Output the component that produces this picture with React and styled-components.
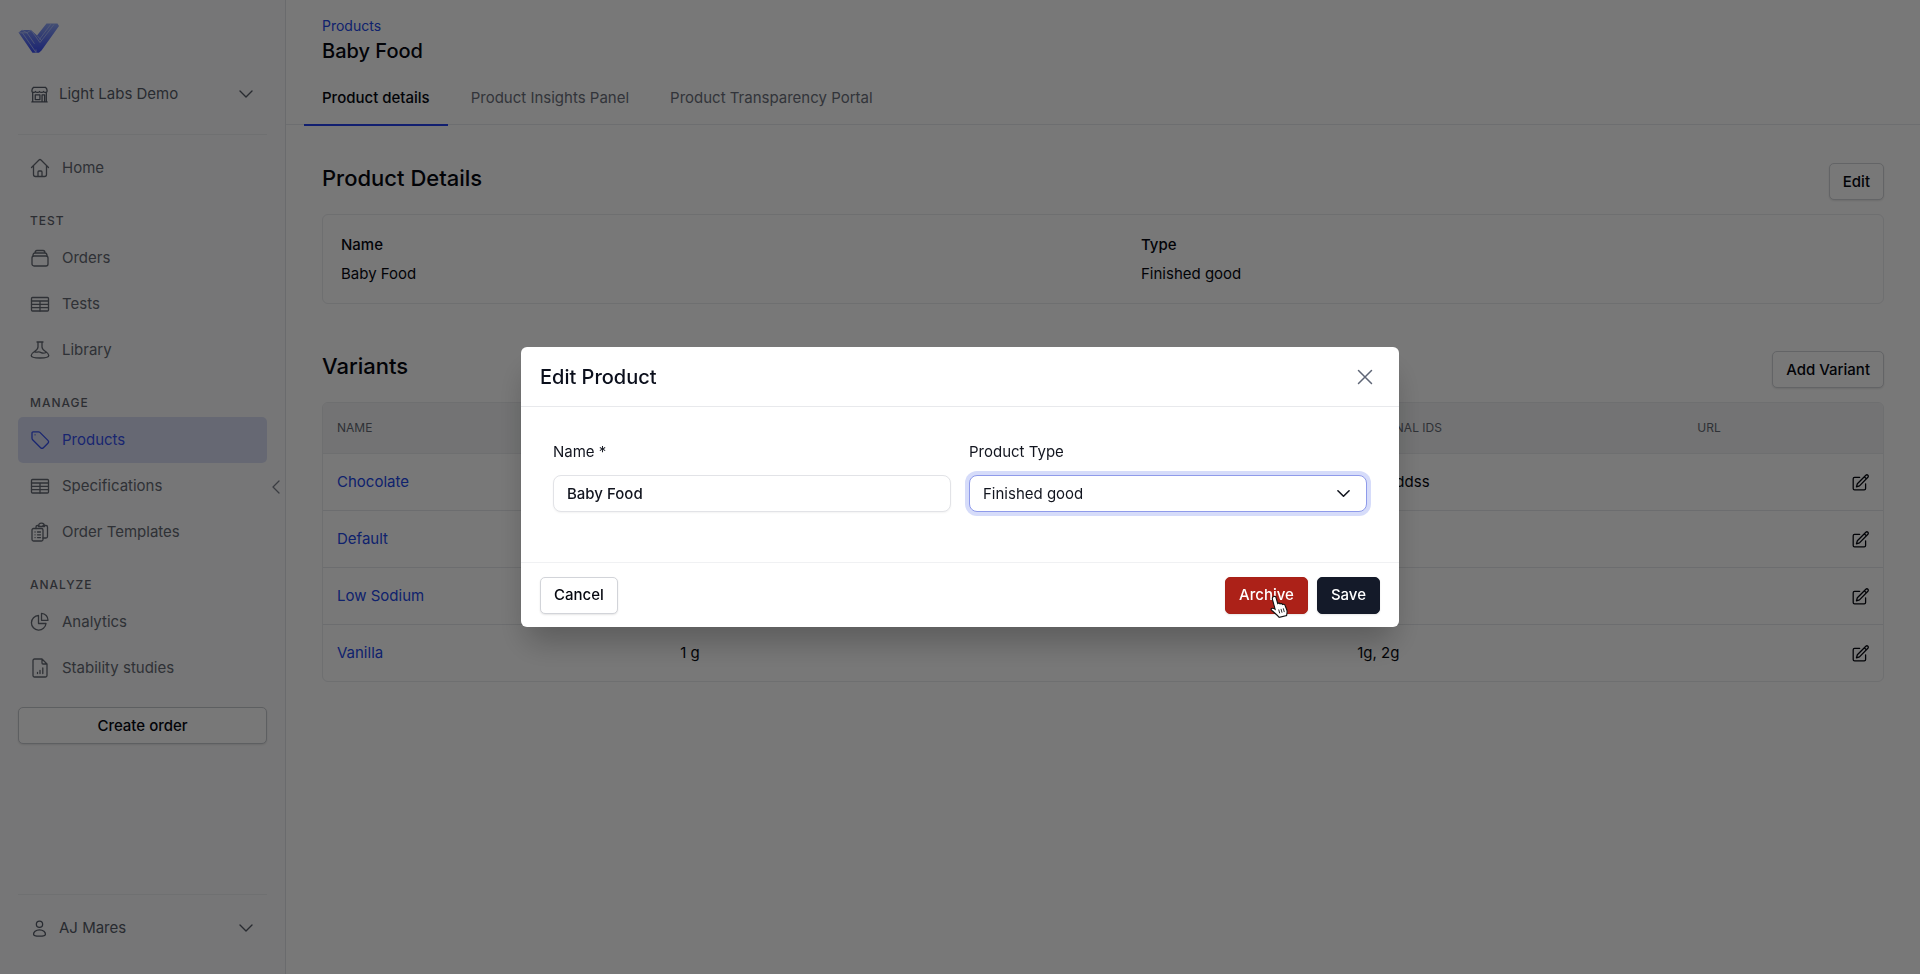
import React from 'react'
import styled, { createGlobalStyle } from 'styled-components'

const GlobalStyle = createGlobalStyle`
  * {
    box-sizing: border-box;
  }
  body {
    margin: 0;
    background: #ffffff;
    color: #05070f;
    font-family: Inter, "Liberation Sans", sans-serif;
    font-size: 15px;
    line-height: 24px;
  }
  button, input, select {
    font: inherit;
    color: inherit;
  }
  h1, h2, p, dl, dd {
    margin: 0;
  }
  a {
    color: #2348e8;
    text-decoration: none;
  }
`

const Layout = styled.div`
  display: flex;
  min-height: 100vh;
`

/* sidebar */
const Sidebar = styled.aside`
  position: relative;
  flex: 0 0 286px;
  display: flex;
  flex-direction: column;
  padding: 23px 18px;
  background: #fbfbfc;
  border-right: 1px solid #e2e4e8;
`
const LogoLink = styled.a`
  display: flex;
  height: 30px;
  margin-bottom: 18px;
`
const AccountButton = styled.button`
  display: flex;
  align-items: center;
  gap: 11px;
  width: 100%;
  height: 46px;
  padding: 0 14px 0 13px;
  border: 0;
  background: none;
  color: #565c69;
  text-align: left;
  span {
    flex: 1;
  }
`
const Divider = styled.hr`
  width: 100%;
  height: 1px;
  margin: ${({ $top }) => $top} 0 10px;
  border: 0;
  background: #eceef1;
`
const Nav = styled.nav`
  display: flex;
  flex-direction: column;
`
const NavHeading = styled.h2`
  height: 44px;
  padding: 20px 12px 4px;
  color: #5f636d;
  font-size: 12px;
  font-weight: 500;
  line-height: 20px;
  letter-spacing: 1px;
  text-transform: uppercase;
`
const NavItem = styled.a`
  display: flex;
  align-items: center;
  gap: 12px;
  height: 46px;
  padding: 0 12px;
  border-radius: 5px;
  background: ${({ $active }) => ($active ? '#d9def5' : 'none')};
  color: ${({ $active }) => ($active ? '#3650ee' : '#646973')};
`
const Footer = styled.div`
  margin-top: auto;
`
const CollapseButton = styled.button`
  position: absolute;
  right: 4px;
  top: 50%;
  display: flex;
  padding: 0;
  border: 0;
  background: none;
  color: #7c818c;
  transform: translateY(-50%);
`

/* buttons */
const Button = styled.button`
  height: 37px;
  padding: 0 13px;
  border: 1px solid #d2d4d9;
  border-radius: 5px;
  background: #ffffff;
  box-shadow: 0 1px 2px rgba(0, 0, 0, 0.1);
  font-weight: 500;
  white-space: nowrap;
`
const CreateButton = styled(Button)`
  width: 100%;
  margin-top: 16px;
  border-color: #c6c9cf;
`
const DangerButton = styled(Button)`
  border-color: #a82017;
  background: #ac2118;
  color: #ffffff;
`
const PrimaryButton = styled(Button)`
  border-color: #141a29;
  background: #141a29;
  color: #ffffff;
`

/* page */
const Main = styled.main`
  flex: 1;
  min-width: 0;
`
const PageHeader = styled.header`
  padding: 16px 18px 0;
  border-bottom: 1px solid #e8eaed;
`
const Breadcrumb = styled.a`
  display: block;
  padding: 0 18px;
  font-size: 14px;
  line-height: 20px;
`
const PageTitle = styled.h1`
  padding: 0 18px;
  font-size: 20px;
  font-weight: 500;
  line-height: 30px;
`
const Tabs = styled.div`
  display: flex;
  gap: 5px;
  margin-bottom: -2px;
`
const Tab = styled.button`
  padding: 20px 18px 14px;
  border: 0;
  border-bottom: 2px solid ${({ $active }) => ($active ? '#2443ee' : 'transparent')};
  background: none;
  color: ${({ $active }) => ($active ? '#05070f' : '#6b707b')};
  font-weight: ${({ $active }) => ($active ? 500 : 400)};
`
const Content = styled.div`
  display: flex;
  flex-direction: column;
  gap: 47px;
  padding: 38px 36px;
`
const SectionHead = styled.div`
  display: flex;
  justify-content: space-between;
  align-items: flex-start;
  margin-bottom: 14px;
`
const SectionTitle = styled.h2`
  font-size: 22px;
  font-weight: 500;
  line-height: 30px;
`
const DetailCard = styled.dl`
  display: grid;
  grid-template-columns: 1fr 1fr;
  gap: 76px;
  padding: 18px 18px 17px;
  border: 1px solid #eaebee;
  border-radius: 6px;
`
const DetailLabel = styled.dt`
  margin-bottom: 5px;
  font-weight: 500;
`
const TableCard = styled.div`
  border: 1px solid #eaebee;
  border-radius: 6px;
  overflow: hidden;
`
const Table = styled.table`
  width: 100%;
  table-layout: fixed;
  border-spacing: 0;
  text-align: left;
`
const HeadCell = styled.th`
  height: 51px;
  padding: 0 14px;
  border-bottom: 1px solid #eaebee;
  background: #f4f5f6;
  color: #646973;
  font-size: 12px;
  font-weight: 400;
  text-transform: uppercase;
`
const Cell = styled.td`
  height: 57px;
  padding: 0 14px;
  border-bottom: 1px solid #e6e8eb;
  text-align: ${({ $end }) => ($end ? 'right' : 'left')};
  tr:last-child & {
    height: 56px;
    border-bottom: 0;
  }
`
const IconButton = styled.button`
  display: inline-flex;
  padding: 0;
  border: 0;
  background: none;
  vertical-align: middle;
`

/* modal */
const Backdrop = styled.div`
  position: fixed;
  inset: 0;
  display: flex;
  align-items: center;
  justify-content: center;
  background: rgba(0, 0, 0, 0.53);
`
const Modal = styled.div`
  width: 878px;
  max-width: 100%;
  border-radius: 6px;
  background: #ffffff;
  box-shadow: 0 20px 30px -6px rgba(0, 0, 0, 0.25);
`
const ModalHeader = styled.div`
  display: flex;
  align-items: center;
  justify-content: space-between;
  height: 60px;
  padding: 0 26px 0 19px;
  border-bottom: 1px solid #e8e9ec;
  color: #5f6676;
`
const ModalTitle = styled.h2`
  color: #0b0f1c;
  font-size: 20px;
  font-weight: 500;
`
const ModalBody = styled.div`
  display: grid;
  grid-template-columns: 1fr 1fr;
  gap: 18px;
  padding: 33px 32px 50px;
`
const Field = styled.div`
  display: flex;
  flex-direction: column;
  gap: 11px;
  color: #12151f;
`
const Input = styled.input`
  width: 100%;
  height: 37px;
  padding: 0 13px;
  border: 1px solid #e2e3e7;
  border-radius: 8px;
  background: #ffffff;
  box-shadow: 0 1px 2px rgba(0, 0, 0, 0.05);
  font-weight: 500;
  outline: none;
`
const SelectBox = styled.div`
  position: relative;
  svg {
    position: absolute;
    right: 17px;
    top: 12px;
    pointer-events: none;
  }
`
const Select = styled.select`
  display: block;
  width: 100%;
  height: 37px;
  padding: 0 13px;
  border: 1px solid #8f9bea;
  border-radius: 8px;
  background: #ffffff;
  box-shadow: 0 0 0 4px #d6dcfa;
  appearance: none;
  outline: none;
`
const ModalFooter = styled.div`
  display: flex;
  align-items: center;
  gap: 9px;
  height: 65px;
  padding: 0 19px;
  border-top: 1px solid #f0f1f3;
`
const Spacer = styled.div`
  flex: 1;
`
const HoverTarget = styled.div`
  position: relative;
  svg {
    position: absolute;
    left: 44px;
    top: 18px;
    pointer-events: none;
  }
`

const Svg = ({ size = 20, width = size, height = size, box = '0 0 20 20', stroke = 1.3, children }) => (
  <svg
    width={width}
    height={height}
    viewBox={box}
    fill="none"
    stroke="currentColor"
    strokeWidth={stroke}
    strokeLinecap="round"
    strokeLinejoin="round"
    aria-hidden="true"
  >
    {children}
  </svg>
)

const Logo = () => (
  <svg width="42" height="30" viewBox="0 0 42 30" aria-hidden="true">
    <defs>
      <linearGradient id="mark" x1="0" y1="0" x2="0" y2="1">
        <stop offset="0" stopColor="#8fa6f5" />
        <stop offset="1" stopColor="#3a4df5" />
      </linearGradient>
    </defs>
    <path d="M.5 9.500 4 7h9l6 5.500L28.500.5h11L41 3 23.500 27.500 21 29.800h-6.500Z" fill="url(#mark)" />
    <g fill="none" stroke="#b9c6fa" strokeWidth="0.8">
      <path d="M1 9.800h8L13 7M4.500 10 18 29.500M9 9.800l7.500 11M13 7l9 12.500L36 1.500M19 12.500l4.500 5M33 1 21.500 16.500M18 29.500v-3M9 9.800 4 7" />
    </g>
  </svg>
)

const StoreIcon = () => (
  <Svg size={17} stroke={1.5}>
    <path d="M3 1.500h14c1.500 1.200 2 2.800 2 4.500 0 2-3.500 2-4.200.5C14 8 10.800 8 10 6.500 9.200 8 6 8 5.200 6.500 4.500 8 1 8 1 6c0-1.700.5-3.300 2-4.500ZM2 8v10.500M18 8v10.500M1 18.700h18M5 10.500h5.500V16H5ZM13 18.500v-8h3v8" />
  </Svg>
)
const HomeIcon = () => (
  <Svg>
    <path d="M1.500 9.500 9 2a1.500 1.500 0 0 1 2 0l7.500 7.500M3.500 8v8.500a2 2 0 0 0 2 2h9a2 2 0 0 0 2-2V8M8 18.500V14a1 1 0 0 1 1-1h2a1 1 0 0 1 1 1v4.500" />
  </Svg>
)
const OrdersIcon = () => (
  <Svg>
    <rect x="2" y="8" width="16" height="10" rx="2" />
    <path d="M3 8c0-2 .7-3 2-3h10c1.300 0 2 1 2 3M5 5c0-1.600.7-2.500 2-2.500h6c1.300 0 2 .9 2 2.500" />
  </Svg>
)
const TableIcon = () => (
  <Svg>
    <rect x="1.500" y="3.500" width="17" height="13.500" rx="1" />
    <path d="M1.500 7h17M1.500 10.300h17M1.500 13.600h17M10 7v10" />
  </Svg>
)
const FlaskIcon = () => (
  <Svg>
    <path d="M7 2h6M8 2v5c0 2-1.500 3.200-3.500 4.500C2.500 12.800 1.200 14 1.200 15.500 1.200 17 2.500 18 10 18s8.800-1 8.800-2.500c0-1.500-1.300-2.700-3.300-4C13.500 10.200 12 9 12 7V2M4.500 11.800c2 .8 3.500-.3 5.500.4s3 2 6.500 0" />
  </Svg>
)
const TagIcon = () => (
  <Svg>
    <path d="M3 1.800h5.500a2 2 0 0 1 1.400.6l8 8a2 2 0 0 1 0 2.800l-4.500 4.500a2 2 0 0 1-2.800 0l-8-8A2 2 0 0 1 2 8.300V2.800a1 1 0 0 1 1-1Z" />
    <path d="M5 4.800h.1" />
  </Svg>
)
const ClipboardIcon = () => (
  <Svg>
    <rect x="2" y="6.500" width="11" height="12.500" rx="1.500" />
    <path d="M5 10h.1M7.500 10h3M5 12.800h.1M7.500 12.800h3M5 15.600h.1M7.500 15.600h3M6 6.500V5a1.500 1.500 0 0 1 1.500-1.500H9M13 3.500h3A1.500 1.500 0 0 1 17.500 5v9.500A1.500 1.500 0 0 1 16 16h-3M8.500 4.500c0-2 .5-3.300 3-3.300s3 1.300 3 3.300Z" />
  </Svg>
)
const PieIcon = () => (
  <Svg>
    <path d="M8.500 3.500v8h7.500a7.300 7.300 0 1 1-7.500-8Z" />
    <path d="M11.500 1.300v7h6.500a6.800 6.800 0 0 0-6.500-7Z" />
  </Svg>
)
const ReportIcon = () => (
  <Svg>
    <path d="M3 2.500a1.500 1.500 0 0 1 1.500-1.500h7.500l5 5v11.500a1.500 1.500 0 0 1-1.500 1.500h-11A1.500 1.500 0 0 1 3 17.500ZM12 1v4a1 1 0 0 0 1 1h4M7.500 15.500v-1M10 15.500v-3M12.800 15.500v-5.500" />
  </Svg>
)
const UserIcon = () => (
  <Svg size={17} stroke={1.5}>
    <circle cx="10" cy="5" r="3.700" />
    <path d="M10 11.500c-4.500 0-7 3-7 5.200 0 1.500 2.500 2.300 7 2.300s7-.8 7-2.300c0-2.200-2.500-5.200-7-5.200Z" />
  </Svg>
)
const ChevronDown = ({ size = 14, stroke = 1.4 }) => (
  <Svg size={size} box="0 0 14 14" stroke={stroke}>
    <path d="m1 4 6 6 6-6" />
  </Svg>
)
const EditIcon = () => (
  <Svg size={17} stroke={1.5}>
    <path d="M9 4H3a1.600 1.600 0 0 0-1.600 1.600v11.400A1.600 1.600 0 0 0 3 18.600h11.400a1.600 1.600 0 0 0 1.600-1.600v-5.500" />
    <path d="M16.300 1.500a1.600 1.600 0 0 1 2.400 2.400L8.800 14l-3.600 1.200L6.300 11.500ZM14.500 3.300l2.400 2.400" />
  </Svg>
)
const HandCursor = () => (
  <svg width="21" height="24" viewBox="0 0 21 24" aria-hidden="true">
    <path
      d="M4.800 1.500c1.200-.4 2 .2 2.300 1.300L8.700 8.500c.8-.7 2-.5 2.400.4.900-.6 2.100-.3 2.500.6 1-.5 2.200 0 2.600 1.200l1.700 4.500c.6 1.800 0 3.300-.3 5.300l-7.400 1.900c-1.500-2-3.600-3.500-5.600-5.400-1.300-1.200-2.900-1.700-2.500-2.900.4-1.100 2.300-1 4 .1L3.300 3.800C3 2.700 3.600 1.900 4.800 1.500Z"
      fill="#ffffff"
      stroke="#111111"
      strokeWidth="1.100"
    />
    <path d="m9.700 14.500 1 3.800M12 13.900l1 3.800M14.300 13.300l1 3.800" stroke="#111111" strokeWidth="0.900" />
  </svg>
)

const sections = [
  { items: [{ label: 'Home', Icon: HomeIcon }] },
  {
    title: 'Test',
    items: [
      { label: 'Orders', Icon: OrdersIcon },
      { label: 'Tests', Icon: TableIcon },
      { label: 'Library', Icon: FlaskIcon },
    ],
  },
  {
    title: 'Manage',
    items: [
      { label: 'Products', Icon: TagIcon, active: true },
      { label: 'Specifications', Icon: TableIcon },
      { label: 'Order Templates', Icon: ClipboardIcon },
    ],
  },
  {
    title: 'Analyze',
    items: [
      { label: 'Analytics', Icon: PieIcon },
      { label: 'Stability studies', Icon: ReportIcon },
    ],
  },
]

const tabs = ['Product details', 'Product Insights Panel', 'Product Transparency Portal']

const variants = [
  { name: 'Chocolate', size: '', ids: 'ssdfsddss' },
  { name: 'Default', size: '', ids: '' },
  { name: 'Low Sodium', size: '', ids: '' },
  { name: 'Vanilla', size: '1 g', ids: '1g, 2g' },
]

const SideMenu = () => (
  <Sidebar>
    <LogoLink href="#" aria-label="Light Labs">
      <Logo />
    </LogoLink>
    <AccountButton type="button">
      <StoreIcon />
      <span>Light Labs Demo</span>
      <ChevronDown />
    </AccountButton>
    <Divider $top="17px" />
    <Nav>
      {sections.map(({ title, items }) => (
        <React.Fragment key={title || 'top'}>
          {title && <NavHeading>{title}</NavHeading>}
          {items.map(({ label, Icon, active }) => (
            <NavItem key={label} href="#" $active={active}>
              <Icon />
              {label}
            </NavItem>
          ))}
        </React.Fragment>
      ))}
    </Nav>
    <CreateButton type="button">Create order</CreateButton>
    <Footer>
      <Divider $top="0" />
      <AccountButton type="button">
        <UserIcon />
        <span>AJ Mares</span>
        <ChevronDown />
      </AccountButton>
    </Footer>
    <CollapseButton type="button" aria-label="Collapse sidebar">
      <Svg width={10} height={14} box="0 0 10 14">
        <path d="M8 1 2 7l6 6" />
      </Svg>
    </CollapseButton>
  </Sidebar>
)

const VariantsTable = () => (
  <TableCard>
    <Table>
      <colgroup>
        <col width="22%" />
        <col width="21.700%" />
        <col width="21.700%" />
        <col width="21.800%" />
        <col />
      </colgroup>
      <thead>
        <tr>
          <HeadCell>Name</HeadCell>
          <HeadCell />
          <HeadCell />
          <HeadCell>External IDs</HeadCell>
          <HeadCell>URL</HeadCell>
        </tr>
      </thead>
      <tbody>
        {variants.map(({ name, size, ids }) => (
          <tr key={name}>
            <Cell>
              <a href="#">{name}</a>
            </Cell>
            <Cell>{size}</Cell>
            <Cell />
            <Cell>{ids}</Cell>
            <Cell $end>
              <IconButton type="button" aria-label={`Edit ${name}`}>
                <EditIcon />
              </IconButton>
            </Cell>
          </tr>
        ))}
      </tbody>
    </Table>
  </TableCard>
)

const EditProductModal = () => (
  <Backdrop>
    <Modal role="dialog" aria-modal="true" aria-labelledby="modal-title">
      <ModalHeader>
        <ModalTitle id="modal-title">Edit Product</ModalTitle>
        <IconButton type="button" aria-label="Close">
          <Svg size={16} box="0 0 16 16" stroke={1.5}>
            <path d="m1.500 1.500 13 13M14.500 1.500l-13 13" />
          </Svg>
        </IconButton>
      </ModalHeader>
      <ModalBody>
        <Field>
          <label htmlFor="name">Name *</label>
          <Input id="name" defaultValue="Baby Food" />
        </Field>
        <Field>
          <label htmlFor="type">Product Type</label>
          <SelectBox>
            <Select id="type" defaultValue="Finished good">
              <option>Finished good</option>
            </Select>
            <ChevronDown size={13} stroke={1.7} />
          </SelectBox>
        </Field>
      </ModalBody>
      <ModalFooter>
        <Button type="button">Cancel</Button>
        <Spacer />
        <HoverTarget>
          <DangerButton type="button">Archive</DangerButton>
          <HandCursor />
        </HoverTarget>
        <PrimaryButton type="button">Save</PrimaryButton>
      </ModalFooter>
    </Modal>
  </Backdrop>
)

const App = () => (
  <>
    <GlobalStyle />
    <Layout>
      <SideMenu />
      <Main>
        <PageHeader>
          <Breadcrumb href="#">Products</Breadcrumb>
          <PageTitle>Baby Food</PageTitle>
          <Tabs role="tablist">
            {tabs.map((tab, i) => (
              <Tab key={tab} type="button" role="tab" aria-selected={i === 0} $active={i === 0}>
                {tab}
              </Tab>
            ))}
          </Tabs>
        </PageHeader>
        <Content>
          <section>
            <SectionHead>
              <SectionTitle>Product Details</SectionTitle>
              <Button type="button">Edit</Button>
            </SectionHead>
            <DetailCard>
              <div>
                <DetailLabel>Name</DetailLabel>
                <dd>Baby Food</dd>
              </div>
              <div>
                <DetailLabel>Type</DetailLabel>
                <dd>Finished good</dd>
              </div>
            </DetailCard>
          </section>
          <section>
            <SectionHead>
              <SectionTitle>Variants</SectionTitle>
              <Button type="button">Add Variant</Button>
            </SectionHead>
            <VariantsTable />
          </section>
        </Content>
      </Main>
    </Layout>
    <EditProductModal />
  </>
)

export default App
